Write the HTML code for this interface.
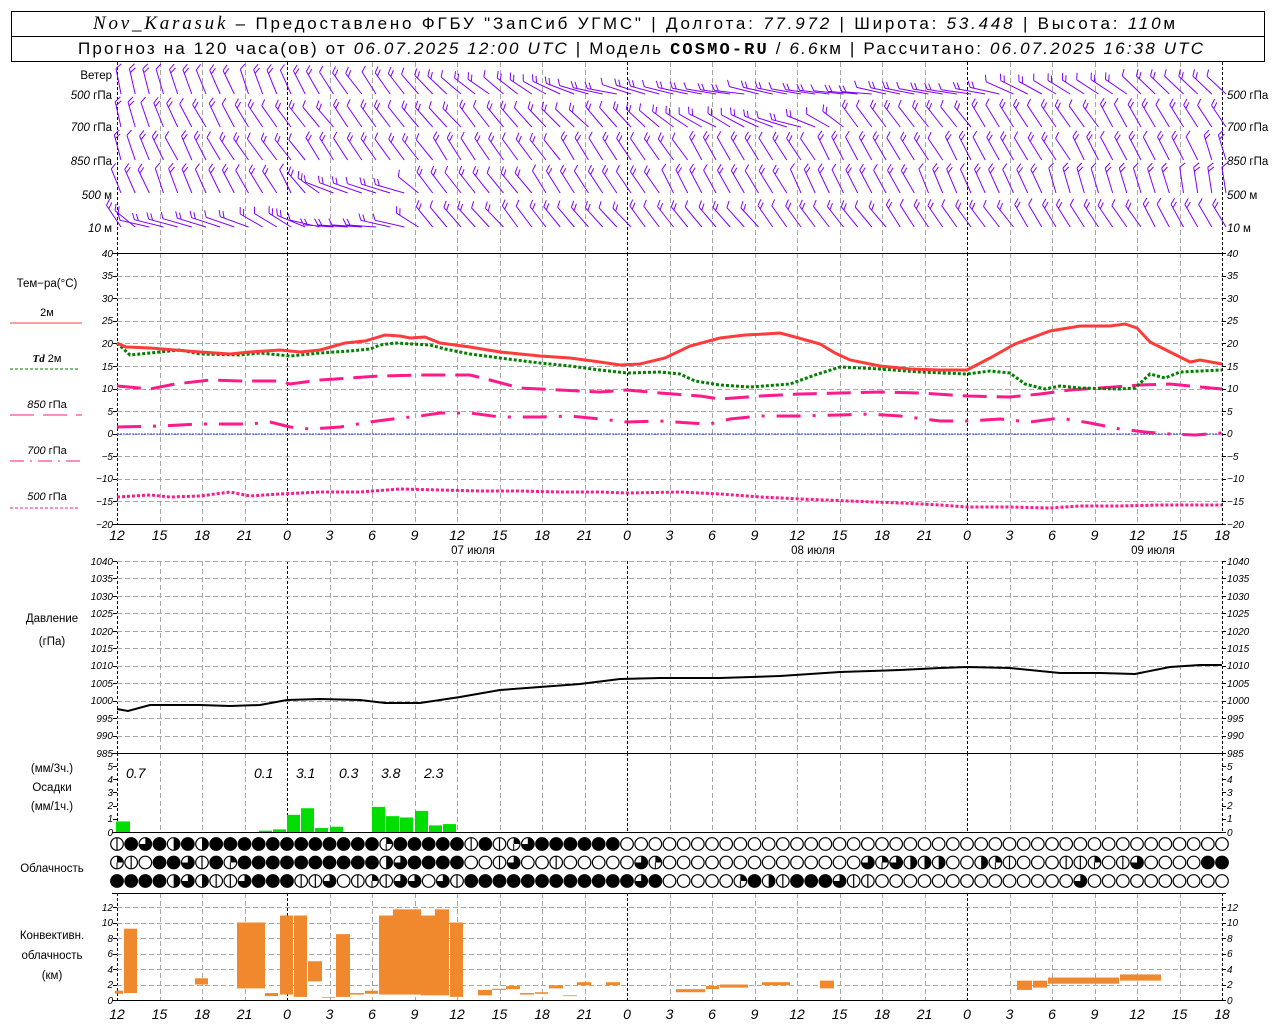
<!DOCTYPE html>
<html><head><meta charset="utf-8">
<style>
html,body{margin:0;padding:0;background:#fff;}
svg{display:block;}
text{font-family:"Liberation Sans","DejaVu Sans",sans-serif;fill:#000;}
.t{font-size:11.5px;}
.n{font-size:10px;font-style:italic;}
.ax{font-size:14px;font-style:italic;}
.h{font-size:17px;}
.i{font-style:italic;}
</style></head><body>
<svg id="s" width="1280" height="1024" viewBox="0 0 1280 1024" xmlns="http://www.w3.org/2000/svg">
<rect width="1280" height="1024" fill="#fff"/>
<g id="grid"></g>
<g id="data"></g>
<!-- header -->
<rect x="11.5" y="11.5" width="1253" height="50" fill="none" stroke="#000"/>
<line x1="11" y1="36.5" x2="1265" y2="36.5" stroke="#000"/>
<text class="h" x="93" y="29" textLength="1082" lengthAdjust="spacing"><tspan font-family="Liberation Serif" font-style="italic" font-size="19">Nov_Karasuk</tspan> – Предоставлено ФГБУ "ЗапСиб УГМС" | Долгота: <tspan class="i">77.972</tspan> | Широта: <tspan class="i">53.448</tspan> | Высота: <tspan class="i">110</tspan>м</text>
<text class="h" x="78" y="54" textLength="1125" lengthAdjust="spacing">Прогноз на 120 часа(ов) от <tspan class="i">06.07.2025 12:00 UTC</tspan>  | Модель <tspan font-family="Liberation Mono" font-weight="bold">COSMO-RU</tspan> / <tspan class="i">6.6</tspan>км | Рассчитано: <tspan class="i">06.07.2025 16:38 UTC</tspan></text>

<!-- wind labels -->
<g class="t" font-size="11">
<text x="112" y="79" text-anchor="end">Ветер</text>
<text x="112" y="99" text-anchor="end"><tspan class="i">500</tspan> гПа</text>
<text x="112" y="131" text-anchor="end"><tspan class="i">700</tspan> гПа</text>
<text x="112" y="165" text-anchor="end"><tspan class="i">850</tspan> гПа</text>
<text x="112" y="199" text-anchor="end"><tspan class="i">500</tspan> м</text>
<text x="112" y="232" text-anchor="end"><tspan class="i">10</tspan>  м</text>
<text x="1227" y="99"><tspan class="i">500</tspan> гПа</text>
<text x="1227" y="131"><tspan class="i">700</tspan> гПа</text>
<text x="1227" y="165"><tspan class="i">850</tspan> гПа</text>
<text x="1227" y="199"><tspan class="i">500</tspan> м</text>
<text x="1227" y="232"><tspan class="i">10</tspan>  м</text>
</g>

<!-- temp legend -->
<g class="t">
<text x="47" y="287" text-anchor="middle">Тем−ра(°С)</text>
<text x="47" y="316" text-anchor="middle" font-size="11">2м</text>
<line x1="10" y1="323" x2="82" y2="323" stroke="#ff3b3b"/>
<text x="47" y="362" text-anchor="middle" font-size="11"><tspan class="i" font-family="Liberation Serif" font-weight="bold">Td</tspan>  2м</text>
<line x1="10" y1="369" x2="78" y2="369" stroke="#008000" stroke-dasharray="3,2"/>
<text x="47" y="408" text-anchor="middle" font-size="11"><tspan class="i">850</tspan> гПа</text>
<line x1="10" y1="415" x2="82" y2="415" stroke="#ff1a8c" stroke-dasharray="24,9"/>
<text x="47" y="454" text-anchor="middle" font-size="11"><tspan class="i">700</tspan> гПа</text>
<line x1="10" y1="461" x2="82" y2="461" stroke="#ff1a8c" stroke-dasharray="14,6,2,6"/>
<text x="47" y="500" text-anchor="middle" font-size="11"><tspan class="i">500</tspan> гПа</text>
<line x1="10" y1="508" x2="78" y2="508" stroke="#ff1a8c" stroke-dasharray="3,2"/>
<text x="52" y="622" text-anchor="middle">Давление</text>
<text x="52" y="645" text-anchor="middle">(гПа)</text>
<text x="52" y="772" text-anchor="middle">(мм/3ч.)</text>
<text x="52" y="791" text-anchor="middle">Осадки</text>
<text x="52" y="810" text-anchor="middle">(мм/1ч.)</text>
<text x="52" y="872" text-anchor="middle">Облачность</text>
<text x="52" y="939" text-anchor="middle">Конвективн.</text>
<text x="52" y="959" text-anchor="middle">облачность</text>
<text x="52" y="979" text-anchor="middle">(км)</text>
</g>

<!-- ticks -->
<g class="n">
<g text-anchor="end">
<text x="113" y="257">40</text><text x="113" y="279">35</text><text x="113" y="302">30</text><text x="113" y="324">25</text><text x="113" y="347">20</text><text x="113" y="370">15</text><text x="113" y="392">10</text><text x="113" y="415">5</text><text x="113" y="437">0</text><text x="113" y="460">−5</text><text x="113" y="482">−10</text><text x="113" y="505">−15</text><text x="113" y="528">−20</text>
<text x="113" y="565">1040</text><text x="113" y="582">1035</text><text x="113" y="600">1030</text><text x="113" y="617">1025</text><text x="113" y="635">1020</text><text x="113" y="652">1015</text><text x="113" y="669">1010</text><text x="113" y="687">1005</text><text x="113" y="704">1000</text><text x="113" y="722">995</text><text x="113" y="739">990</text><text x="113" y="757">985</text>
<text x="113" y="770">5</text><text x="113" y="783">4</text><text x="113" y="796">3</text><text x="113" y="809">2</text><text x="113" y="822">1</text><text x="113" y="836">0</text>
<text x="113" y="911">12</text><text x="113" y="926">10</text><text x="113" y="942">8</text><text x="113" y="957">6</text><text x="113" y="973">4</text><text x="113" y="988">2</text><text x="113" y="1004">0</text>
</g>
<g>
<text x="1227" y="257">40</text><text x="1227" y="279">35</text><text x="1227" y="302">30</text><text x="1227" y="324">25</text><text x="1227" y="347">20</text><text x="1227" y="370">15</text><text x="1227" y="392">10</text><text x="1227" y="415">5</text><text x="1227" y="437">0</text><text x="1227" y="460">−5</text><text x="1227" y="482">−10</text><text x="1227" y="505">−15</text><text x="1227" y="528">−20</text>
<text x="1227" y="565">1040</text><text x="1227" y="582">1035</text><text x="1227" y="600">1030</text><text x="1227" y="617">1025</text><text x="1227" y="635">1020</text><text x="1227" y="652">1015</text><text x="1227" y="669">1010</text><text x="1227" y="687">1005</text><text x="1227" y="704">1000</text><text x="1227" y="722">995</text><text x="1227" y="739">990</text><text x="1227" y="757">985</text>
<text x="1227" y="770">5</text><text x="1227" y="783">4</text><text x="1227" y="796">3</text><text x="1227" y="809">2</text><text x="1227" y="822">1</text><text x="1227" y="836">0</text>
<text x="1227" y="911">12</text><text x="1227" y="926">10</text><text x="1227" y="942">8</text><text x="1227" y="957">6</text><text x="1227" y="973">4</text><text x="1227" y="988">2</text><text x="1227" y="1004">0</text>
</g>
</g>

<!-- time axes -->
<g class="ax" text-anchor="middle">
<text x="117" y="540">12</text><text x="159.5" y="540">15</text><text x="202" y="540">18</text><text x="244.5" y="540">21</text><text x="287" y="540">0</text><text x="329.5" y="540">3</text><text x="372" y="540">6</text><text x="414.5" y="540">9</text><text x="457" y="540">12</text><text x="499.5" y="540">15</text><text x="542" y="540">18</text><text x="584.5" y="540">21</text><text x="627" y="540">0</text><text x="669.5" y="540">3</text><text x="712" y="540">6</text><text x="754.5" y="540">9</text><text x="797" y="540">12</text><text x="839.5" y="540">15</text><text x="882" y="540">18</text><text x="924.5" y="540">21</text><text x="967" y="540">0</text><text x="1009.5" y="540">3</text><text x="1052" y="540">6</text><text x="1094.5" y="540">9</text><text x="1137" y="540">12</text><text x="1179.5" y="540">15</text><text x="1222" y="540">18</text>
<text x="117" y="1019">12</text><text x="159.5" y="1019">15</text><text x="202" y="1019">18</text><text x="244.5" y="1019">21</text><text x="287" y="1019">0</text><text x="329.5" y="1019">3</text><text x="372" y="1019">6</text><text x="414.5" y="1019">9</text><text x="457" y="1019">12</text><text x="499.5" y="1019">15</text><text x="542" y="1019">18</text><text x="584.5" y="1019">21</text><text x="627" y="1019">0</text><text x="669.5" y="1019">3</text><text x="712" y="1019">6</text><text x="754.5" y="1019">9</text><text x="797" y="1019">12</text><text x="839.5" y="1019">15</text><text x="882" y="1019">18</text><text x="924.5" y="1019">21</text><text x="967" y="1019">0</text><text x="1009.5" y="1019">3</text><text x="1052" y="1019">6</text><text x="1094.5" y="1019">9</text><text x="1137" y="1019">12</text><text x="1179.5" y="1019">15</text><text x="1222" y="1019">18</text>
</g>
<g class="t" text-anchor="middle" font-size="12">
<text x="473" y="554">07 июля</text><text x="813" y="554">08 июля</text><text x="1153" y="554">09 июля</text>
</g>
<g class="ax" font-size="13">
<text x="126" y="778">0.7</text><text x="254" y="778">0.1</text><text x="296" y="778">3.1</text><text x="339" y="778">0.3</text><text x="381" y="778">3.8</text><text x="424" y="778">2.3</text>
</g>
</svg>
<script>
(function(){
var NS="http://www.w3.org/2000/svg";
var G=document.getElementById('grid'),D=document.getElementById('data');
function el(p,n,a){var e=document.createElementNS(NS,n);for(var k in a)e.setAttribute(k,a[k]);p.appendChild(e);return e;}
function X(h){return 117+h*1105/78;}
// vertical grid
for(var h=0;h<=78;h+=3){
 var x=Math.round(X(h))+0.5;
 var mid=((h-12)%24===0)||h===0||h===78;
 [[62,253],[253,524],[561,753],[753,832],[893,1000]].forEach(function(r){
  el(G,'line',{x1:x,y1:r[0],x2:x,y2:r[1],stroke:mid?'#000':'#a8a8a8','stroke-dasharray':mid?'3,2':'5,3','stroke-width':1});
 });
}
function hg(y){el(G,'line',{x1:117,y1:y,x2:1222,y2:y,stroke:'#a8a8a8','stroke-dasharray':'5,3'});}
for(var v=35;v>=-15;v-=5)hg(Math.round(253+(40-v)*4.517)+0.5);
for(var p=1040;p>985;p-=5)hg(Math.round(561+(1040-p)*3.49)+0.5);
for(var k=12;k>0;k-=2)hg(Math.round(1000-k*7.75)+0.5);
[253.5,524.5,753.5,832.5,893.5,1000.5].forEach(function(y){el(G,'line',{x1:112,y1:y,x2:1226,y2:y,stroke:'#000'});});
el(G,'line',{x1:117,y1:434,x2:1222,y2:434,stroke:'#2040ff','stroke-dasharray':'2,1'});
function ticks(y0,y1,st){for(var y=y0;y<=y1+0.1;y+=st){var yy=Math.round(y)+0.5;el(G,'line',{x1:113,y1:yy,x2:117,y2:yy,stroke:'#000'});el(G,'line',{x1:1222,y1:yy,x2:1226,y2:yy,stroke:'#000'});}}
ticks(253,524,4.517*5);ticks(561,753,3.49*5);ticks(766,832,13.2);ticks(907,1000,15.5);

function pl(a,attrs){attrs.points=a.map(function(q){return q[0]+','+q[1];}).join(' ');attrs.fill='none';el(D,'polyline',attrs);}
var T2=[[117,343],[126,347],[150,348],[175,350],[200,352],[230,354],[250,352],[280,350],[300,352],[320,350],[345,343],[365,341],[385,335],[400,336],[410,338],[425,337],[440,343],[470,347],[500,352],[540,356],[570,358],[600,362],[620,365],[640,364],[665,358],[690,346],[720,338],[745,335],[765,334],[780,333],[795,337],[820,344],[835,353],[850,360],[880,366],[910,369],[940,370],[967,370],[990,358],[1015,344],[1050,331],[1080,326],[1110,326],[1125,324],[1137,328],[1150,342],[1170,352],[1190,362],[1200,360],[1222,364]];
var TD=[[117,343],[130,355],[160,352],[180,350],[200,354],[240,355],[260,353],[290,356],[320,353],[350,351],[370,349],[380,345],[395,343],[430,345],[445,349],[470,354],[500,358],[540,363],[570,366],[600,370],[627,373],[660,372],[680,374],[695,381],[720,385],[750,387],[790,384],[815,375],[840,367],[880,369],[920,372],[967,374],[990,371],[1010,373],[1025,384],[1045,389],[1060,386],[1080,388],[1120,389],[1135,388],[1150,374],[1165,378],[1180,372],[1222,370]];
var T850=[[117,386],[150,389],[175,384],[210,380],[240,381],[280,381],[290,384],[320,380],[350,378],[380,376],[420,375],[470,375],[490,380],[520,388],[560,390],[600,392],[627,390],[660,393],[700,396],[720,399],[760,396],[800,394],[840,393],[880,392],[920,393],[967,396],[1010,397],[1040,394],[1070,390],[1100,388],[1140,385],[1170,384],[1200,387],[1222,389]];
var T700=[[117,427],[160,426],[200,424],[250,424],[270,422],[290,427],[310,429],[340,427],[370,422],[400,418],[420,416],[440,413],[470,413],[500,417],[540,417],[570,416],[600,419],[627,422],[660,421],[690,423],[710,424],[730,419],[760,416],[800,416],[840,415],[870,414],[900,416],[940,421],[967,421],[1000,419],[1030,422],[1060,418],[1090,423],[1120,429],[1145,432],[1170,434],[1195,435],[1222,433]];
var T500=[[117,497],[150,495],[170,497],[200,496],[230,492],[250,496],[280,494],[320,492],[360,492],[400,489],[440,490],[480,491],[520,491],[560,492],[600,492],[627,493],[680,492],[720,494],[760,497],[800,499],[850,501],[900,503],[940,505],[967,507],[1010,507],[1050,508],[1080,506],[1120,506],[1160,505],[1222,505]];
pl(T500,{stroke:'#ff1a8c','stroke-width':3,'stroke-dasharray':'3,2'});
pl(T700,{stroke:'#ff1a8c','stroke-width':3,'stroke-dasharray':'24,12,3,12'});
pl(T850,{stroke:'#ff1a8c','stroke-width':3,'stroke-dasharray':'24,10'});
pl(TD,{stroke:'#008000','stroke-width':3,'stroke-dasharray':'3,2'});
pl(T2,{stroke:'#ff3b3b','stroke-width':3});
var P=[[117,709],[128,711],[150,705],[200,705],[230,706],[260,705],[287,700],[320,699],[360,700],[385,703],[420,703],[460,697],[500,690],[540,687],[580,684],[620,679],[660,678],[720,678],[780,676],[840,672],[900,670],[940,668],[967,667],[1010,668],[1060,673],[1100,673],[1135,674],[1170,667],[1200,665],[1222,665]];
pl(P,{stroke:'#000','stroke-width':2});
var pr=[[116,130,0.8],[259,272,0.1],[273,286,0.2],[287,300,1.3],[301,314,1.8],[315,328,0.3],[330,343,0.4],[372,385,1.9],[386,399,1.2],[400,413,1.1],[415,428,1.6],[429,442,0.5],[443,456,0.6]];
pr.forEach(function(b){var h=b[2]*13.2;el(D,'rect',{x:b[0],y:832-h,width:b[1]-b[0],height:h,fill:'#00dd00'});});
var cv=[[115,123,0.8,1.2],[124,137,0.9,9.2],[195,208,2.0,2.8],[237,265,1.5,10],[265,278,0.5,0.9],[280,293,0.7,10.9],[294,307,0.4,10.9],[308,322,2.4,5.0],[322,335,0.3,0.4],[336,350,0.4,8.5],[350,364,0.7,0.9],[365,378,0.8,1.2],[379,393,0.7,10.9],[393,421,0.7,11.7],[421,435,0.6,10.9],[435,449,0.6,11.7],[450,463,0.4,10],[478,492,0.6,1.3],[492,506,1.3,1.45],[506,520,1.4,1.8],[520,534,0.7,0.9],[535,548,0.8,1.0],[549,563,1.5,1.9],[563,577,0.5,0.6],[577,591,1.9,2.3],[606,620,1.9,2.3],[676,705,1.0,1.4],[706,719,1.4,1.8],[720,748,1.6,2.0],[762,790,1.9,2.3],[820,834,1.5,2.5],[1017,1032,1.3,2.5],[1033,1047,1.6,2.5],[1048,1119,2.1,2.9],[1120,1161,2.5,3.3]];
cv.forEach(function(b){el(D,'rect',{x:b[0],y:1000-b[3]*7.75,width:b[1]-b[0],height:(b[3]-b[2])*7.75,fill:'#f0892e'});});
var rows=[
 'vbtbhbhbbbbbbbbbbbbqbbbbbvbvqtbbbbbbwwwwwwwwwwwwwwwwwwwwwwwwwwwwwwwwwwwwwwwwwww',
 'qvwbbtvbqbbbbbbbbbbhtbbbbwwvtwwvwwwwwtqwwwwwwwwwwwwwwtqthhhwwhqvwwwvvqwvtwwwwbbb',
 'bbbbhthvvtbbbvvtwvqvttwtvbbbbbbbbbbbbtbwwwwwqbhvbbbtvvwwwwwwwwwwwwwwtwwwwwwwwwww'];
var ry=[844,862.5,881],r=6.3;
rows.forEach(function(s,ri){for(var i=0;i<=78;i++){var c=s[i]||'w',cx=X(i),cy=ry[ri];
 el(D,'circle',{cx:cx,cy:cy,r:r,fill:c==='b'?'#000':'#fff',stroke:'#000','stroke-width':1.2});
 if(c==='v')el(D,'line',{x1:cx,y1:cy-r,x2:cx,y2:cy+r,stroke:'#000','stroke-width':1.2});
 if(c==='h')el(D,'path',{d:'M'+cx+','+(cy-r)+'A'+r+','+r+' 0 0 1 '+cx+','+(cy+r)+'Z',fill:'#000'});
 if(c==='q'){el(D,'path',{d:'M'+cx+','+cy+'L'+cx+','+(cy-r)+'A'+r+','+r+' 0 0 1 '+(cx+r)+','+cy+'Z',fill:'#000'});el(D,'line',{x1:cx,y1:cy,x2:cx,y2:cy+r,stroke:'#000'});}
 if(c==='t')el(D,'path',{d:'M'+cx+','+cy+'L'+cx+','+(cy-r)+'A'+r+','+r+' 0 1 1 '+(cx-r)+','+cy+'Z',fill:'#000'});
}});
var lv=[
 {y:95,k:[[0,15],[12,25],[20,40],[28,55],[34,75],[50,82],[60,80],[66,60],[72,50],[78,45]]},
 {y:128,k:[[0,15],[10,35],[24,40],[36,45],[42,60],[48,75],[52,40],[60,35],[78,30]]},
 {y:161,k:[[0,15],[8,35],[30,35],[50,30],[70,30],[78,20]]},
 {y:194,k:[[0,20],[12,30],[15,70],[20,70],[22,40],[40,30],[60,25],[78,10]]},
 {y:228,k:[[0,30],[2,80],[12,60],[15,85],[20,80],[22,40],[40,40],[60,35],[78,30]]}];
function interp(k,h){for(var i=0;i<k.length-1;i++){if(h>=k[i][0]&&h<=k[i+1][0]){var f=(h-k[i][0])/(k[i+1][0]-k[i][0]);return k[i][1]+f*(k[i+1][1]-k[i][1]);}}return k[k.length-1][1];}
var d='';
lv.forEach(function(L,li){for(var h=0;h<=78;h++){
 var a=(interp(L.k,h)+((h*37+li*11)%9-4))*Math.PI/180;
 var len=a>1.1?30:26;
 var bx=X(h)+4,by=L.y-1;
 var ux=-Math.sin(a),uy=-Math.cos(a);
 var tx=bx+ux*len,ty2=by+uy*len;
 d+='M'+bx.toFixed(1)+','+by.toFixed(1)+'L'+tx.toFixed(1)+','+ty2.toFixed(1);
 var th=60*Math.PI/180,fx=ux*Math.cos(th)-uy*Math.sin(th),fy=ux*Math.sin(th)+uy*Math.cos(th);
 var nf=(h+li)%3===0?1:2;
 for(var j=0;j<nf;j++){var sx=tx-ux*j*4,sy=ty2-uy*j*4;d+='M'+sx.toFixed(1)+','+sy.toFixed(1)+'l'+(fx*7).toFixed(1)+','+(fy*7).toFixed(1);}
}});
el(D,'path',{d:d,stroke:'#8000ff','stroke-width':1,fill:'none'});
})();
</script>
</body></html>
